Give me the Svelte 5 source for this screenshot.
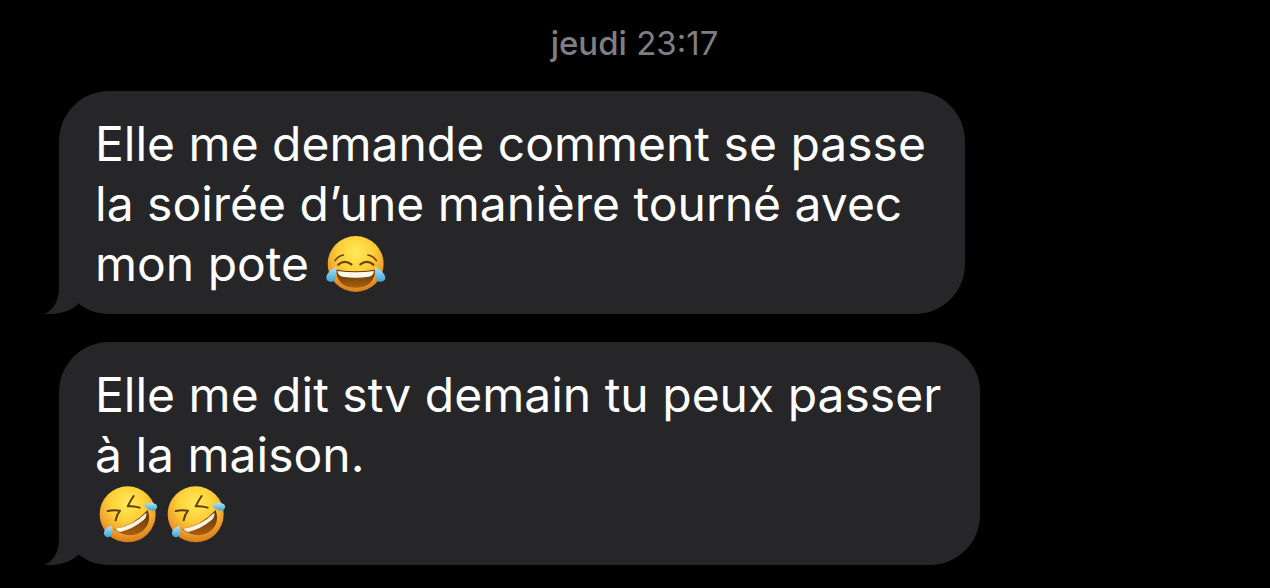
<script lang="ts">
  type Emoji = 'joy' | 'rofl';

  interface Line {
    text: string;
    emojis?: Emoji[];
  }

  interface Message {
    id: number;
    lines: Line[];
  }

  const day = 'jeudi';
  const time = '23:17';

  const messages: Message[] = [
    {
      id: 1,
      lines: [
        { text: 'Elle me demande comment se passe' },
        { text: 'la soirée d’une manière tourné avec' },
        { text: 'mon pote ', emojis: ['joy'] },
      ],
    },
    {
      id: 2,
      lines: [
        { text: 'Elle me dit stv demain tu peux passer' },
        { text: 'à la maison.' },
        { text: '', emojis: ['rofl', 'rofl'] },
      ],
    },
  ];
</script>

<svg class="defs" aria-hidden="true">
  <defs>
    <radialGradient id="face" cx="0.5" cy="0.3" r="0.72">
      <stop offset="0" stop-color="#ffea58" />
      <stop offset="0.45" stop-color="#fdcf38" />
      <stop offset="0.75" stop-color="#f0a02c" />
      <stop offset="1" stop-color="#d5741b" />
    </radialGradient>
    <linearGradient id="mouth" x1="0" y1="0" x2="0" y2="1">
      <stop offset="0" stop-color="#5c300a" />
      <stop offset="1" stop-color="#a8600f" />
    </linearGradient>
    <linearGradient id="tear" x1="0" y1="0" x2="0" y2="1">
      <stop offset="0" stop-color="#b5e4f3" />
      <stop offset="1" stop-color="#3ba5dc" />
    </linearGradient>
  </defs>
</svg>

<main class="conversation">
  <p class="timestamp"><strong>{day}</strong> {time}</p>

  {#each messages as message (message.id)}
    <div class="bubble">
      {#each message.lines as line}
        <span class="line">
          {line.text}{#each line.emojis ?? [] as emoji}
            {#if emoji === 'joy'}
              <svg class="emoji" viewBox="36 25 204 180" role="img" aria-label="😂">
                <circle cx="134" cy="115" r="84" fill="url(#face)" />
                <g fill="none" stroke="#6d420d" stroke-linecap="round">
                  <path d="M72 105Q81 91 97 88M171 88Q187 91 196 105" stroke-width="5" />
                  <path d="M82 117Q101 101 121 116M148 116Q168 101 187 117" stroke-width="7" />
                </g>
                <path d="M76 132Q134 142 192 132Q192 184 134 186Q76 184 76 132Z" fill="url(#mouth)" />
                <path d="M79 136Q134 144 189 136Q188 150 174 153Q134 159 94 153Q81 150 79 136Z" fill="#fff8ec" />
                <path d="M77 123C63 128 45 143 46 157C47 171 67 173 73 159C77 149 75 136 77 123Z" fill="url(#tear)" />
                <path d="M191 123C205 128 223 143 223 157C221 171 201 173 195 159C191 149 193 136 191 123Z" fill="url(#tear)" />
              </svg>
            {:else}
              <svg class="emoji" viewBox="18 28 204 180" role="img" aria-label="🤣">
                <circle cx="116" cy="116" r="84" fill="url(#face)" />
                <g fill="none" stroke="#5f3d0c" stroke-width="6" stroke-linecap="round" stroke-linejoin="round">
                  <path d="M56 106Q74 102 93 105Q83 117 80 134" />
                  <path d="M134 61Q124 75 116 92Q134 90 152 96" />
                </g>
                <path d="M74 160Q133 151 176 103Q190 145 158 168Q119 193 74 160Z" fill="url(#mouth)" />
                <path d="M78 159Q132 151 172 111Q174 124 163 134Q132 160 94 169Q83 166 78 159Z" fill="#fff1e3" />
                <path d="M67 150C54 153 44 163 45 174C47 187 64 188 69 176C72 168 69 158 67 150Z" fill="url(#tear)" />
                <path d="M165 91C174 80 190 78 201 86C209 94 202 105 190 105C180 104 173 97 165 91Z" fill="url(#tear)" />
              </svg>
            {/if}
          {/each}
        </span>
      {/each}
      <svg class="tail" viewBox="0 0 42 60" aria-hidden="true">
        <path d="M15 0V34C15 46 10 56 0 60C12 61 26 58 34 50L42 20V0Z" />
      </svg>
    </div>
  {/each}
</main>

<style>
  :global(body) {
    background: #000;
  }

  .defs {
    position: absolute;
    width: 0;
    height: 0;
  }

  .conversation {
    display: flex;
    flex-direction: column;
    align-items: flex-start;
    gap: 28px;
    padding: 24px 60px 23px 59px;
    font-family: Inter, 'Liberation Sans', sans-serif;
    color: #fff;
  }

  .timestamp {
    align-self: center;
    margin: 0;
    font-size: 33px;
    line-height: 39px;
    color: #7f7f82;
  }

  .timestamp strong {
    font-weight: 500;
  }

  .bubble {
    position: relative;
    padding: 23px 39px 20px 36px;
    border-radius: 50px;
    background: #262628;
    font-size: 48px;
    line-height: 60px;
  }

  .line {
    display: block;
    height: 60px;
    white-space: pre-wrap;
  }

  .emoji {
    width: 68px;
    height: 60px;
    vertical-align: top;
  }

  .tail {
    position: absolute;
    left: -15px;
    bottom: 0;
    width: 42px;
    height: 60px;
    fill: #262628;
  }
</style>
